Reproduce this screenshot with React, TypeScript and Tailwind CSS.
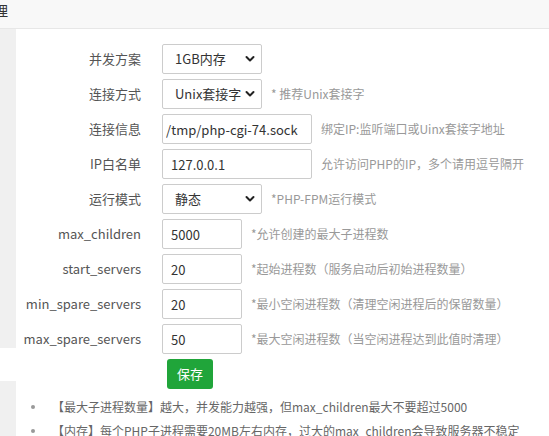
import React from "react";

const font = { fontFamily: '"Noto Sans CJK SC","Noto Sans",sans-serif' };

function Chevron() {
  return (
    <svg
      className="pointer-events-none absolute right-[7px] top-1/2 -translate-y-1/2"
      width="10"
      height="7"
      viewBox="0 0 10 7"
    >
      <polyline points="1.5,1.5 5,5 8.5,1.5" fill="none" stroke="#222" strokeWidth="2" strokeLinecap="round" strokeLinejoin="round" />
    </svg>
  );
}

function Select({ value, options }: { value: string; options: string[] }) {
  return (
    <div className="relative w-[100px] h-[30px]">
      <select
        defaultValue={value}
        className="appearance-none w-full h-full border border-[#cccccc] rounded-[2px] bg-white pl-[12px] pr-[20px] text-[13px] text-[#333] outline-none"
        style={font}
      >
        {options.map((o) => (
          <option key={o}>{o}</option>
        ))}
      </select>
      <Chevron />
    </div>
  );
}

function Input({ value, w, pl }: { value: string; w: string; pl?: string }) {
  return (
    <input
      defaultValue={value}
      className={`${w} h-[30px] border border-[#cccccc] rounded-[2px] bg-white ${pl ?? "pl-[8px]"} pr-[4px] text-[13px] text-[#333] outline-none`}
      style={font}
    />
  );
}

function Row({ label, children, hint }: { label: string; children: React.ReactNode; hint?: string }) {
  return (
    <div className="flex items-center h-[30px]">
      <div className="w-[125px] text-right text-[13px] text-[#555] mr-[21px] whitespace-nowrap">{label}</div>
      {children}
      {hint && <div className="ml-[9px] text-[12px] text-[#999] whitespace-nowrap">{hint}</div>}
    </div>
  );
}

export default function App() {
  return (
    <div className="w-[549px] h-[436px] overflow-hidden bg-white" style={font}>
      <div className="h-[29px] bg-[#f8f8f8] border-b border-[#e7e7e7] overflow-hidden">
        <div className="ml-[-20px] text-[14px] leading-[20px] text-[#333] whitespace-nowrap">管理</div>
      </div>
      <div className="flex">
        <div className="w-[16px] flex flex-col shrink-0">
          <div className="h-[319px] bg-[#f0f0f0]" />
          <div className="h-[33px] bg-white" />
          <div className="h-[60px] bg-[#f0f0f0]" />
        </div>
        <div className="flex-1 pt-[15px]">
          <div className="flex flex-col gap-[5px]">
            <Row label="并发方案">
              <Select value="1GB内存" options={["1GB内存", "2GB内存", "4GB内存"]} />
            </Row>
            <Row label="连接方式" hint="* 推荐Unix套接字">
              <Select value="Unix套接字" options={["Unix套接字", "TCP套接字"]} />
            </Row>
            <Row label="连接信息" hint="绑定IP:监听端口或Uinx套接字地址">
              <Input value="/tmp/php-cgi-74.sock" w="w-[150px]" pl="pl-[3px]" />
            </Row>
            <Row label="IP白名单" hint="允许访问PHP的IP，多个请用逗号隔开">
              <Input value="127.0.0.1" w="w-[150px]" />
            </Row>
            <Row label="运行模式" hint="*PHP-FPM运行模式">
              <Select value="静态" options={["静态", "动态", "按需"]} />
            </Row>
            <Row label="max_children" hint="*允许创建的最大子进程数">
              <Input value="5000" w="w-[80px]" />
            </Row>
            <Row label="start_servers" hint="*起始进程数（服务启动后初始进程数量）">
              <Input value="20" w="w-[80px]" />
            </Row>
            <Row label="min_spare_servers" hint="*最小空闲进程数（清理空闲进程后的保留数量）">
              <Input value="20" w="w-[80px]" />
            </Row>
            <Row label="max_spare_servers" hint="*最大空闲进程数（当空闲进程达到此值时清理）">
              <Input value="50" w="w-[80px]" />
            </Row>
          </div>
          <div className="mt-[5px] pl-[151px]">
            <button className="w-[46px] h-[30px] rounded-[3px] bg-[#20a53a] text-white text-[13px]">保存</button>
          </div>
          <ul className="mt-[6px]">
            <li className="flex items-center h-[24px] text-[12px] text-[#666] whitespace-nowrap">
              <span className="w-[4px] h-[4px] rounded-full bg-[#999] ml-[15px] mr-[17px] shrink-0" />
              【最大子进程数量】越大，并发能力越强，但max_children最大不要超过5000
            </li>
            <li className="flex items-center h-[24px] text-[12px] text-[#666] whitespace-nowrap">
              <span className="w-[4px] h-[4px] rounded-full bg-[#999] ml-[15px] mr-[17px] shrink-0" />
              【内存】每个PHP子进程需要20MB左右内存，过大的max_children会导致服务器不稳定
            </li>
          </ul>
        </div>
      </div>
    </div>
  );
}
